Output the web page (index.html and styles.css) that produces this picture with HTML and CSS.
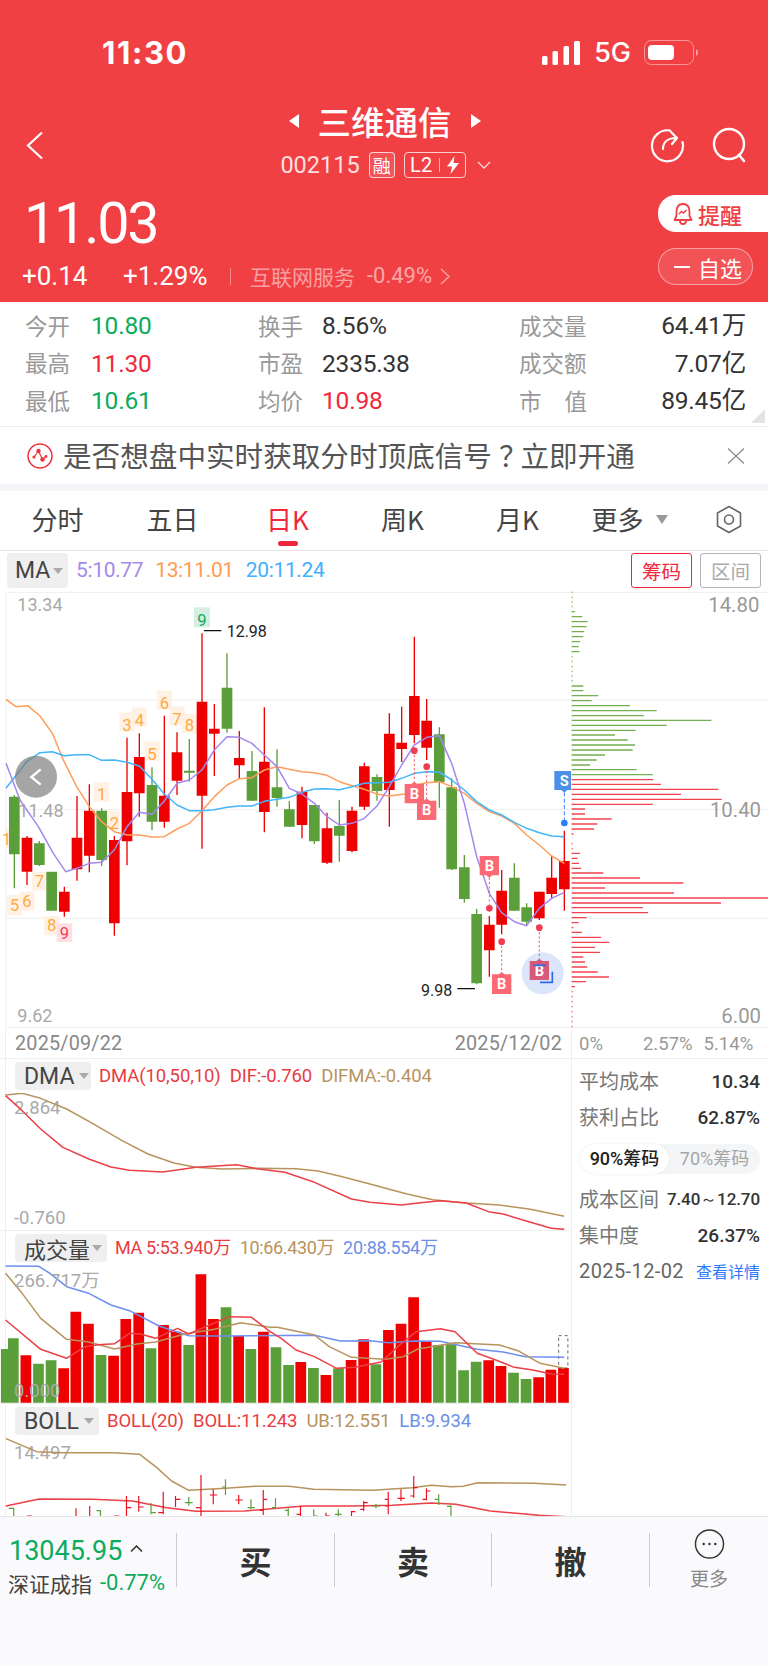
FILE: index.html
```html
<!DOCTYPE html>
<html lang="zh">
<head>
<meta charset="utf-8">
<title>三维通信</title>
<link rel="stylesheet" href="styles.css">
</head>
<body>
<div class="app">
  <header class="hero">
    <div class="status">
      <span class="time">11:30</span>
      <div class="status-right">
        <svg class="signal" width="38" height="24" viewBox="0 0 38 24"><g fill="#fff"><rect x="0" y="15" width="5.5" height="9" rx="1.5"/><rect x="10.5" y="10" width="5.5" height="14" rx="1.5"/><rect x="21.5" y="5" width="5.5" height="19" rx="1.5"/><rect x="32" y="0" width="6" height="24" rx="1.5"/></g></svg>
        <span class="net">5G</span>
        <svg class="battery" width="54" height="26" viewBox="0 0 54 26"><rect x=".5" y=".5" width="49" height="24" rx="7" fill="none" stroke="#fff" stroke-opacity=".45"/><rect x="4" y="5" width="26" height="15" rx="4" fill="#fff"/><path d="M52 9a4 4 0 0 1 0 7z" fill="#fff" fill-opacity=".5"/></svg>
      </div>
    </div>
    <nav class="nav">
      <svg class="back" width="18" height="29" viewBox="0 0 18 29"><path d="M16 1.5 2 14.5 16 27.5" fill="none" stroke="#fff" stroke-width="2.2"/></svg>
      <div class="nav-center">
        <div class="title-row">
          <svg width="11" height="14" viewBox="0 0 11 14"><path d="M11 0V14L1 7z" fill="#fff"/></svg>
          <h1 class="title">三维通信</h1>
          <svg width="11" height="14" viewBox="0 0 11 14"><path d="M0 0V14L10 7z" fill="#fff"/></svg>
        </div>
        <div class="code-row">
          <span class="code">002115</span>
          <span class="badge badge-rong">融</span>
          <span class="badge badge-l2">L2<i class="badge-sep"></i><svg width="12" height="18" viewBox="0 0 12 18"><path d="M7.5 0 0 10.5H5L3.5 18 12 7H6.5z" fill="#fff"/></svg></span>
          <svg class="down" width="14" height="8" viewBox="0 0 14 8"><path d="M1 1l6 6 6-6" fill="none" stroke="#fff" stroke-opacity=".8" stroke-width="1.3"/></svg>
        </div>
      </div>
      <div class="nav-actions">
        <svg width="36" height="36" viewBox="0 0 36 36"><path d="M21 3.5A15.5 15.5 0 1 0 33.5 15" fill="none" stroke="#fff" stroke-width="2.2" stroke-linecap="round"/><path d="M14 22c0-6 4-11 13-11M22 5l6 6-5 6" fill="none" stroke="#fff" stroke-width="2.2" stroke-linecap="round" stroke-linejoin="round"/></svg>
        <svg width="36" height="36" viewBox="0 0 36 36"><circle cx="18" cy="17" r="15" fill="none" stroke="#fff" stroke-width="2.4"/><path d="M28 28l5 6" stroke="#fff" stroke-width="2.6" stroke-linecap="round"/></svg>
      </div>
    </nav>
    <div class="quote">
      <div class="quote-left">
        <div class="price">11.03</div>
        <div class="change">
          <span class="chg-a">+0.14</span>
          <span class="chg-b">+1.29%</span>
          <i class="chg-sep"></i>
          <span class="sector">互联网服务</span>
          <span class="sector-pct">-0.49%</span>
          <svg width="10" height="17" viewBox="0 0 10 17"><path d="M1 1l8 7.5-8 7.5" fill="none" stroke="#fff" stroke-opacity=".55" stroke-width="1.3"/></svg>
        </div>
      </div>
      <div class="quote-right">
        <button class="remind">
          <svg width="20" height="22" viewBox="0 0 20 22"><path d="M10 1C5.5 1 3.5 4.5 3.5 9v4L1.5 17h17l-2-4V9C16.5 4.5 14.5 1 10 1zM7 18a3 3 0 0 0 6 0" fill="none" stroke="#f24145" stroke-width="1.8" stroke-linejoin="round"/><path d="M6 11l2.5-2.5 2 1.5 3-3" fill="none" stroke="#f24145" stroke-width="1.5"/></svg>
          <span>提醒</span>
        </button>
        <button class="watch"><i class="watch-minus"></i><span>自选</span></button>
      </div>
    </div>
  </header>

  <section class="stats">
    <div class="stat"><span class="lab lab-a">今开</span><span class="val up-g">10.80</span></div>
    <div class="stat"><span class="lab lab-b">换手</span><span class="val">8.56%</span></div>
    <div class="stat stat-end"><span class="lab">成交量</span><span class="val">64.41万</span></div>
    <div class="stat"><span class="lab lab-a">最高</span><span class="val up-r">11.30</span></div>
    <div class="stat"><span class="lab lab-b">市盈</span><span class="val">2335.38</span></div>
    <div class="stat stat-end"><span class="lab">成交额</span><span class="val">7.07亿</span></div>
    <div class="stat"><span class="lab lab-a">最低</span><span class="val up-g">10.61</span></div>
    <div class="stat"><span class="lab lab-b">均价</span><span class="val up-r">10.98</span></div>
    <div class="stat stat-end"><span class="lab lab-just"><b>市</b><b>值</b></span><span class="val">89.45亿</span></div>
    <i class="corner"></i>
  </section>

  <section class="notice">
    <svg width="26" height="26" viewBox="0 0 26 26"><circle cx="13" cy="13" r="12" fill="none" stroke="#f0323c" stroke-width="1.5"/><path d="M7 14l4.5-6 4 8.5 3.5-3" fill="none" stroke="#f0323c" stroke-width="1.1"/><g fill="#f0323c"><circle cx="11.5" cy="8" r="2.2"/><circle cx="15.5" cy="16.5" r="2.2"/><circle cx="7" cy="14" r="1.6"/><circle cx="19" cy="13.5" r="1.4"/></g></svg>
    <p class="notice-text">是否想盘中实时获取分时顶底信号<span class="notice-q">？</span>立即开通</p>
    <svg width="18" height="16" viewBox="0 0 18 16"><path d="M1 .5l16 15M17 .5l-16 15" stroke="#888" stroke-width="1.2"/></svg>
  </section>

  <div class="band"></div>

  <section class="tabs">
    <span class="tab">分时</span>
    <span class="tab">五日</span>
    <span class="tab tab-on">日K</span>
    <span class="tab">周K</span>
    <span class="tab">月K</span>
    <span class="tab tab-more">更多<svg width="12" height="9" viewBox="0 0 12 9"><path d="M0 0h12L6 9z" fill="#999"/></svg></span>
    <span class="tab tab-hex"><svg width="26" height="29" viewBox="0 0 26 29"><path d="M13 1.5 24.5 8V21L13 27.5 1.5 21V8z" fill="none" stroke="#666" stroke-width="1.6" stroke-linejoin="round"/><circle cx="13" cy="14.5" r="4.5" fill="none" stroke="#666" stroke-width="1.6"/></svg></span>
  </section>

  <section class="ma-row">
    <span class="pick pick-ma">MA<i class="caret"></i></span>
    <span class="ma ma-5">5:10.77</span>
    <span class="ma ma-13">13:11.01</span>
    <span class="ma ma-20">20:11.24</span>
    <span class="ma-btns"><button class="mbtn mbtn-on">筹码</button><button class="mbtn">区间</button></span>
  </section>

  <svg class="kchart" width="768" height="440" viewBox="0 0 2304 1320">
    <g stroke="#efefef" stroke-width="3" fill="none"><path d="M18 7H2304M18 330H2304M18 658H2304M18 985H2304M18 1312H2304M18 7V1320"/></g>
    <path d="M1716 0V1320" stroke="#eee" stroke-width="2"/>
    <text class="ax" x="52" y="64">13.34</text>
    <text class="ax" x="55" y="680">11.48</text>
    <text class="ax" x="52" y="1296">9.62</text>
    <text class="ax ax-r" x="2278" y="66">14.80</text>
    <text class="ax ax-r" x="2283" y="682">10.40</text>
    <text class="ax ax-r" x="2283" y="1298">6.00</text>

    <g class="td">
      <rect x="20" y="915" width="46" height="60"/><rect x="58" y="905" width="46" height="58"/><rect x="96" y="846" width="46" height="56"/><rect x="132" y="978" width="46" height="58"/>
      <rect x="282" y="577" width="46" height="58"/><rect x="320" y="662" width="38" height="58"/><rect x="358" y="367" width="46" height="58"/><rect x="395" y="352" width="46" height="58"/><rect x="433" y="454" width="46" height="58"/><rect x="470" y="302" width="46" height="56"/><rect x="508" y="349" width="46" height="58"/><rect x="545" y="372" width="46" height="58"/><rect x="18" y="716" width="12" height="58"/>
    </g>
    <rect x="170" y="1000" width="47" height="56" fill="#fde0e3"/>
    <rect x="582" y="52" width="48" height="60" fill="#d6efe2"/>

    <path class="wick red" d="M81 738V885M193 890V980M231 618V872M268 583V847M343 738V1037M381 443V826M418 430V680M493 377V713M531 427V615M606 130V776M643 342V558M718 423V565M793 352V727M906 590V745M981 668V822M1056 650V787M1093 518V660M1168 370V710M1205 350V516M1243 140V460M1280 327V510M1468 978V1160M1505 840V1033M1618 905V990M1655 798V925M1693 722V962"/>
    <path class="body red" d="M81 743V845M193 905V965M231 743V838M268 662V797M343 750V1000M381 606V754M418 501V610M493 617V695M531 487V572M606 335V617M643 416V431M718 504V526M793 515V666M906 605V705M981 715V818M1056 662V783M1093 529V650M1168 431V600M1205 458V477M1243 318V435M1280 392V473M1468 1004V1081M1505 902V1004M1618 905V985M1655 863V912M1693 813V898"/>
    <path class="wick green" d="M43 615V895M118 753V828M305 655V828M456 532V720M568 447V575M681 190V428M756 483V632M831 478V650M868 633V710M943 645V762M1018 630V815M1131 553V632M1318 412V653M1355 565V840M1393 795V938M1430 957V1183M1543 820V962M1580 940V1005"/>
    <path class="body green" d="M43 620V793M118 760V825M155 845V962M305 662V810M456 585V695M568 542V548M681 293V416M756 543V632M831 592V624M868 658V710M943 645V754M1018 708V737M1131 561V603M1318 433V577M1355 592V838M1393 832V927M1430 972V1180M1543 863V962M1580 952V995"/>

    <polyline class="ln ln-o" points="18,328 48,350 83,347 120,378 157,430 190,510 230,590 268,650 305,695 343,725 381,735 418,735 456,741 493,740 531,717 568,700 606,662 643,620 681,585 718,566 756,563 793,540 831,530 868,538 906,545 943,548 981,556 1018,575 1056,587 1093,598 1131,612 1168,618 1215,612 1243,585 1280,578 1318,575 1355,590 1393,610 1430,640 1468,665 1505,678 1543,700 1580,735 1618,765 1655,798 1693,820"/>
    <polyline class="ln ln-b" points="18,595 80,515 120,488 157,485 193,497 230,494 268,494 305,511 343,510 381,517 418,528 456,568 493,612 531,645 568,662 606,662 643,659 681,652 718,648 756,648 793,634 831,628 868,622 906,607 943,597 981,596 1018,599 1056,590 1093,580 1131,578 1168,577 1205,565 1243,550 1280,545 1318,546 1355,570 1393,600 1430,635 1468,660 1505,675 1543,697 1580,715 1618,728 1655,738 1693,740"/>
    <polyline class="ln ln-p" points="18,520 60,630 115,710 160,790 197,845 230,835 268,820 305,817 343,780 381,710 418,667 456,673 493,633 531,580 568,570 606,540 643,480 681,440 718,442 756,460 793,495 831,530 868,595 906,612 943,640 981,680 1018,705 1056,700 1093,685 1131,648 1168,590 1205,525 1243,465 1280,442 1318,437 1355,520 1393,640 1430,800 1468,910 1505,968 1543,995 1580,1007 1618,955 1655,925 1693,907"/>

    <g class="tdt">
      <text x="43" y="962">5</text><text x="81" y="952">6</text><text x="118" y="891">7</text><text x="155" y="1024">8</text><text x="305" y="631">1</text><text x="343" y="716">2</text><text x="381" y="422">3</text><text x="418" y="407">4</text><text x="456" y="509">5</text><text x="493" y="356">6</text><text x="531" y="404">7</text><text x="568" y="424">8</text><text x="20" y="764">1</text>
      <text x="193" y="1046" class="tdt-r">9</text>
      <text x="606" y="107" class="tdt-g">9</text>
    </g>

    <path d="M612 122H664M1372 1196H1425" stroke="#111" stroke-width="4"/>
    <text class="hl" x="680" y="142">12.98</text>
    <text class="hl" x="1263" y="1217">9.98</text>

    <path class="chip chip-g" d="M1715 7h3M1715 22h3M1715 36h3M1715 50h3M1715 65h10M1715 80h32M1715 95h48M1715 110h45M1715 125h38M1715 140h35M1715 155h25M1715 170h21M1715 185h23M1715 200h3M1715 215h3M1715 230h3M1715 245h3M1715 258h3M1715 272h3M1715 288h35M1715 302h35M1715 317h80M1715 332h60M1715 347h175M1715 362h255M1715 377h217M1715 391h419M1715 406h285M1715 421h192M1715 435h130M1715 450h168M1715 465h190M1715 480h183M1715 495h100M1715 510h75M1715 525h55M1715 539h195M1715 554h243"/>
    <path class="chip chip-r" d="M1715 569h245M1715 583h268M1715 598h440M1715 613h328M1715 628h450M1715 643h243M1715 657h40M1715 672h40M1715 687h120M1715 702h77M1715 717h67M1715 732h5M1715 761h3M1715 776h3M1715 790h25M1715 805h18M1715 820h22M1715 835h29M1715 849h95M1715 864h205M1715 879h335M1715 894h100M1715 909h307M1715 924h589M1715 939h448M1715 953h213M1715 968h229M1715 983h45M1715 998h21M1715 1013h5M1715 1027h31M1715 1042h88M1715 1057h113M1715 1072h70M1715 1087h85M1715 1101h35M1715 1116h40M1715 1131h47M1715 1146h78M1715 1161h112M1715 1175h43M1715 1190h10M1715 1205h3M1715 1220h3M1715 1235h3M1715 1250h3M1715 1265h3M1715 1280h3M1715 1295h3M1715 1310h3"/>

    <circle cx="108" cy="560" r="63" fill="#7a7a7a" fill-opacity=".68"/>
    <path d="M122 538 94 561 122 584" fill="none" stroke="#fff" stroke-width="7"/>

    <circle cx="1628" cy="1150" r="63" fill="#dbe6fb"/>
    <g class="dash"><path d="M1243 482V575M1280 530V625M1468 863V955M1505 1055V1146M1618 1013V1106"/></g>
    <g fill="#f23d50"><circle cx="1243" cy="482" r="10"/><circle cx="1280" cy="530" r="10"/><circle cx="1468" cy="955" r="10"/><circle cx="1505" cy="1055" r="10"/><circle cx="1618" cy="1013" r="10"/></g>
    <g class="bm">
      <path d="M1214 582h20l9-7 9 7h20v58h-58z"/><text x="1243" y="626">B</text>
      <path d="M1251 632h20l9-7 9 7h20v58h-58z"/><text x="1280" y="676">B</text>
      <path d="M1439 798h58v58h-20l-9 7-9-7h-20z"/><text x="1468" y="842">B</text>
      <path d="M1476 1153h20l9-7 9 7h20v59h-58z"/><text x="1505" y="1198">B</text>
      <path class="bm-sel" d="M1589 1113h20l9-7 9 7h20v57h-58z"/><text x="1618" y="1157">B</text>
    </g>
    <path d="M1600 1126h38M1620 1177h37V1145" fill="none" stroke="#2f6be8" stroke-width="5"/>
    <path d="M1693 607V690" stroke="#2b7fff" stroke-width="3" stroke-dasharray="12 7"/>
    <circle cx="1693" cy="699" r="10" fill="#2b7fff"/>
    <path d="M1663 543h50v57h-11l-9 8-9-8h-21z" fill="#4a8fe8"/>
    <text class="bm-s" x="1693" y="587">S</text>
  </svg>

  <section class="dates">
    <div class="dates-left"><span>2025/09/22</span><span>2025/12/02</span></div>
    <div class="dates-right"><span>0%</span><span class="pct2">2.57%</span><span>5.14%</span></div>
  </section>

  <section class="lower">
    <div class="panels">
      <div class="panel">
        <div class="panel-head">
          <span class="pick pick-dma">DMA<i class="caret"></i></span>
          <span class="ind red-t">DMA(10,50,10)</span><span class="ind red-t">DIF:-0.760</span><span class="ind tan-t">DIFMA:-0.404</span>
        </div>
        <svg class="plot" width="572" height="137" viewBox="0 1094 572 137">
          <text class="ax-s" x="14" y="1115">2.864</text>
          <text class="ax-s" x="14" y="1225">-0.760</text>
          <g transform="translate(0 1030) scale(.36996 .33333)">
            <polyline class="pl pl-tan" points="15,198 60,193 110,208 180,240 250,283 330,335 400,375 470,402 530,415 600,420 700,418 800,419 860,426 920,442 1000,465 1100,495 1170,512 1260,522 1350,528 1430,540 1525,562"/>
            <polyline class="pl pl-red" points="15,200 60,245 110,300 170,355 240,390 300,414 350,424 440,429 530,415 640,407 700,420 770,430 850,460 950,510 1000,520 1085,528 1130,522 1190,515 1260,522 1320,548 1360,555 1420,575 1490,598 1525,601"/>
          </g>
        </svg>
      </div>
      <div class="panel">
        <div class="panel-head head-vol">
          <span class="pick pick-vol">成交量<i class="caret"></i></span>
          <span class="ind red-t">MA 5:53.940万</span><span class="ind tan-t">10:66.430万</span><span class="ind blue-t">20:88.554万</span>
        </div>
        <svg class="plot" width="572" height="138" viewBox="0 1265 572 138">
          <g transform="translate(0 1030) scale(.36996 .33333)">
            <path class="vb vb-g" d="M17 957V1118M36 925V1118M104 1001V1118M138 991V1118M273 975V1118M408 955V1118M510 945V1118M611 832V1118M678 957V1118M746 952V1118M780 1005V1118M847 1014V1118M915 1015V1118M1016 1003V1118M1185 945V1118M1219 943V1118M1253 1021V1118M1287 995V1118M1388 1028V1118M1422 1047V1118"/>
            <path class="vb vb-r" d="M70 976V1118M172 1015V1118M205 845V1118M239 881V1118M307 977V1118M340 867V1118M375 848V1118M442 885V1118M476 905V1118M543 733V1118M577 867V1118M645 918V1118M712 905V1118M813 996V1118M881 1035V1118M949 990V1118M983 928V1118M1050 900V1118M1084 881V1118M1118 802V1118M1152 935V1118M1321 991V1118M1354 1008V1118M1456 1042V1118M1489 1019V1118M1523 1014V1118"/>
            <rect class="vbox" x="1510" y="917" width="25" height="97"/>
            <polyline class="pl pl-blue" points="15,708 105,709 135,730 180,770 240,790 300,825 350,842 430,888 510,917 600,918 850,916 920,933 1000,932 1050,938 1120,933 1190,934 1290,958 1360,966 1420,980 1525,982"/>
            <polyline class="pl pl-tan" points="15,730 60,790 110,865 180,928 240,936 310,957 370,942 420,936 500,912 580,898 650,878 730,892 750,892 850,915 890,950 950,982 1040,988 1090,980 1130,957 1230,938 1350,945 1400,962 1460,1000 1525,1015"/>
            <polyline class="pl pl-red" points="15,870 110,958 180,985 230,950 265,944 310,941 350,910 380,912 420,925 480,895 510,912 620,860 680,862 730,905 760,925 800,960 850,980 910,1015 960,1012 1030,996 1075,950 1125,905 1190,896 1230,905 1290,970 1340,990 1390,1012 1440,1020 1490,1032 1525,1033"/>
          </g>
          <text class="ax-s" x="14" y="1287">266.717万</text>
          <text class="ax-s" x="14" y="1397">0.000</text>
        </svg>
      </div>
      <div class="panel">
        <div class="panel-head">
          <span class="pick pick-boll">BOLL<i class="caret"></i></span>
          <span class="ind red-t">BOLL(20)</span><span class="ind red-t">BOLL:11.243</span><span class="ind tan-t">UB:12.551</span><span class="ind blue-t">LB:9.934</span>
        </div>
        <svg class="plot" width="572" height="79" viewBox="0 1437 572 79">
          <text class="ax-s" x="14" y="1458">14.497</text>
          <g transform="translate(0 1400) scale(.4902 .33333)">
            <polyline class="pl pl-tan" points="12,113 75,152 130,155 230,155 285,160 320,200 350,240 385,268 460,262 520,256 590,256 640,265 760,268 840,260 880,253 920,257 945,256 975,245 1090,247 1155,252"/>
            <polyline class="pl pl-red" points="12,315 80,294 190,295 270,300 340,320 400,331 500,330 620,315 720,315 800,313 880,306 930,310 1000,330 1100,343 1155,347"/>
            <path class="ohlc oh-r" d="M55 345h10M155 322V350M183 315V350M233 345h10M258 285V350M283 285V332M333 272V340M358 285V318M410 222V350M435 265V310M487 282V310M537 267V342M613 315V350M665 335V350M717 330V350M742 300V330M792 272V340M818 265V300M844 225V290M870 262V298M400 320h10M258 320h10M283 318h10M323 335h10M358 295h10M428 282h15M480 297h15M530 328h8M537 295h8M605 340h8M665 345h8M717 332h8M735 325h7M742 305h8M785 315h7M785 295h7M811 292h15M844 260h8M837 285h7M870 270h8M862 295h8"/>
            <path class="ohlc oh-g" d="M28 320V350M78 349h12M205 328V350M308 305V340M385 288V314M460 235V282M512 295V325M562 292V325M588 322V345M640 325V350M690 325V350M767 308V322M895 280V312M920 313V350M18 322h10M197 329h8M308 335h10M377 305h16M453 258h7M505 320h15M555 320h7M581 328h7M640 345h8M683 340h14M760 315h15M912 316h8M887 295h8"/>
          </g>
        </svg>
      </div>
    </div>
    <aside class="side">
      <div class="side-row"><span class="side-lab">平均成本</span><span class="side-val">10.34</span></div>
      <div class="side-row"><span class="side-lab">获利占比</span><span class="side-val">62.87%</span></div>
      <div class="pill"><span class="pill-on">90%筹码</span><span class="pill-off">70%筹码</span></div>
      <div class="side-row"><span class="side-lab">成本区间</span><span class="side-val side-range">7.40～12.70</span></div>
      <div class="side-row"><span class="side-lab">集中度</span><span class="side-val">26.37%</span></div>
      <div class="side-row"><span class="side-date">2025-12-02</span><span class="side-link">查看详情</span></div>
    </aside>
  </section>

  <footer class="bar">
    <div class="index">
      <div class="index-top"><span class="index-val">13045.95</span><svg width="13" height="7" viewBox="0 0 13 7"><path d="M1 6.5 6.5 1 12 6.5" fill="none" stroke="#333" stroke-width="1.5"/></svg></div>
      <div class="index-bot"><span class="index-name">深证成指</span><span class="index-pct">-0.77%</span></div>
    </div>
    <div class="act act-1">买</div>
    <div class="act act-2">卖</div>
    <div class="act act-3">撤</div>
    <div class="act-more">
      <svg width="31" height="31" viewBox="0 0 31 31"><circle cx="15.5" cy="15.5" r="14.5" fill="none" stroke="#333" stroke-width="1.5"/><g fill="#333"><circle cx="9.5" cy="15.5" r="1.3"/><circle cx="15.5" cy="15.5" r="1.3"/><circle cx="21.5" cy="15.5" r="1.3"/></g></svg>
      <span>更多</span>
    </div>
  </footer>
</div>
</body>
</html>
```
FILE: styles.css
```css
* { box-sizing: border-box; margin: 0; padding: 0; }
html, body { background: #fff; }
body { width: 768px; height: 1665px; overflow: hidden; font-family: Roboto, "Noto Sans CJK SC", sans-serif; color: #333; }
button { font: inherit; border: 0; background: none; }
i { font-style: normal; }
.app { width: 768px; height: 1665px; display: flex; flex-direction: column; }

.hero { height: 302px; background: #f14044; color: #fff; flex: none; }
.status { height: 105px; display: flex; align-items: center; justify-content: space-between; padding: 0 70px 0 102px; }
.time { font: 700 31px/1 Inter, sans-serif; letter-spacing: 1.6px; }
.status-right { display: flex; align-items: center; }
.net { font: 500 27px/1 Inter, sans-serif; margin: 0 13px 0 14px; }

.nav { height: 80px; display: grid; grid-template-columns: 1fr auto 1fr; padding: 0 21px 0 26px; align-items: center; }
.nav-center { align-self: start; display: flex; flex-direction: column; align-items: center; margin-left: -4px; margin-top: -2px; }
.title-row { display: flex; align-items: center; gap: 19px; height: 36px; }
.title { font: 500 33.5px/36px "Noto Sans CJK SC", sans-serif; }
.code-row { display: flex; align-items: center; height: 26px; margin-top: 13px; margin-left: 2px; }
.code { font: 400 23.5px/26px Roboto, sans-serif; color: rgba(255,255,255,.85); margin-right: 9px; }
.badge { height: 26px; border: 1px solid rgba(255,255,255,.75); border-radius: 4px; display: flex; align-items: center; justify-content: center; }
.badge-rong { width: 26px; font: 400 18px/1 "Noto Sans CJK SC", sans-serif; background: rgba(255,255,255,.1); margin-right: 9px; }
.badge-l2 { width: 62px; font: 400 20px/1 Roboto, sans-serif; gap: 7px; }
.badge-sep { width: 1px; height: 14px; background: rgba(255,255,255,.6); }
.down { margin-left: 11px; }
.nav-actions { display: flex; justify-content: flex-end; gap: 26px; }
.back { justify-self: start; }

.quote { height: 117px; display: flex; justify-content: space-between; }
.quote-left { padding: 10px 0 0 22px; }
.price { font: 400 57.5px/58px Roboto, sans-serif; letter-spacing: -2.2px; margin-left: 2px; }
.change { display: flex; align-items: center; height: 30px; margin-top: 8px; }
.chg-a, .chg-b { font: 400 26px/30px Roboto, sans-serif; }
.chg-a { width: 101px; }
.chg-b { width: 107px; }
.chg-sep { width: 1px; height: 17px; background: rgba(255,255,255,.4); margin-right: 19px; }
.sector { font: 400 21px/30px "Noto Sans CJK SC", sans-serif; color: rgba(255,255,255,.5); margin-right: 12px; }
.sector-pct { font: 400 22px/30px Roboto, sans-serif; color: rgba(255,255,255,.55); margin-right: 8px; }
.quote-right { display: flex; flex-direction: column; align-items: flex-start; width: 110px; padding-top: 10px; gap: 16px; }
.remind { width: 110px; height: 37px; background: #fff; border-radius: 18px 0 0 18px; color: #f14044; display: flex; align-items: center; padding-left: 15px; gap: 5px; font: 500 22px/1 "Noto Sans CJK SC", sans-serif; }
.watch { width: 95px; height: 37px; border: 1px solid rgba(255,255,255,.45); background: rgba(255,255,255,.1); border-radius: 18px; color: #fff; display: flex; align-items: center; padding-left: 15px; gap: 8px; font: 400 22px/1 "Noto Sans CJK SC", sans-serif; }
.watch-minus { width: 16px; height: 2px; background: #fff; }

.stats { position: relative; height: 125px; flex: none; padding: 6px 22px 0 25px; display: grid; grid-template-columns: 233px 261px 1fr; grid-auto-rows: 37.5px; border-bottom: 1px solid #ebebeb; }
.stat { display: flex; align-items: center; }
.stat-end { justify-content: space-between; }
.lab { font: 400 22.5px/1 "Noto Sans CJK SC", sans-serif; color: #999; margin-top: -4px; }
.lab-a { width: 66px; }
.lab-b { width: 64px; }
.lab-just { width: 68px; display: flex; justify-content: space-between; }
.lab-just b { font-weight: 400; }
.val { font: 400 24.5px/1 Roboto, "Noto Sans CJK SC", sans-serif; color: #333; letter-spacing: -.2px; margin-top: -1px; }
.up-g { color: #0dab5c; }
.up-r { color: #f1283c; }
.corner { position: absolute; right: 3px; bottom: 3px; width: 0; height: 0; border-style: solid; border-width: 0 0 14px 14px; border-color: transparent transparent #e4e4e4 transparent; }

.notice { height: 57px; flex: none; display: flex; align-items: center; padding: 0 23px 0 27px; gap: 10px; }
.notice-text { flex: 1; font: 400 28.6px/1 "Noto Sans CJK SC", sans-serif; color: #555; white-space: nowrap; }
.notice-q { display: inline-block; width: 1em; text-align: center; font-feature-settings: "palt"; }
.band { height: 7px; flex: none; background: #f4f5f8; }

.tabs { height: 60px; flex: none; display: grid; grid-template-columns: repeat(6, 115px) 78px; border-bottom: 1px solid #e6e6e6; align-items: center; padding-bottom: 3px; }
.tab { position: relative; text-align: center; font: 400 26px/1 "Noto Sans CJK SC", sans-serif; color: #444; }
.tab-on { color: #f1283c; }
.tab-on::after { content: ""; position: absolute; left: 48px; bottom: -14px; width: 20px; height: 5px; border-radius: 3px; background: #f1283c; }
.tab-more { display: flex; align-items: center; justify-content: center; gap: 12px; padding-right: 6px; }
.tab-hex { display: flex; justify-content: center; }

.ma-row { height: 39px; flex: none; display: flex; align-items: center; padding: 0 7px; }
.pick { display: flex; align-items: center; background: #efefef; border-radius: 4px; color: #444; font: 400 23px/1 "Noto Sans CJK SC", Roboto, sans-serif; height: 28px; flex: none; }
.caret { width: 0; height: 0; border: 5px solid transparent; border-top: 6px solid #aaa; border-bottom: 0; margin-left: 5px; }
.pick-ma { width: 61px; height: 35px; padding-left: 8px; margin-right: 8px; font: 400 23px/1 Roboto, sans-serif; }
.pick-ma .caret { margin-left: 3px; }
.ma { font: 400 21px/1 Roboto, sans-serif; margin-right: 12px; letter-spacing: -.35px; }
.ma-5 { color: #a28ae8; }
.ma-13 { color: #ff9b53; }
.ma-20 { color: #3fb1ff; }
.ma-btns { margin-left: auto; display: flex; gap: 8px; }
.mbtn { width: 61px; height: 35px; border: 1px solid #b5b5b5; border-radius: 3px; color: #aaa; font: 400 19.5px/1 "Noto Sans CJK SC", sans-serif; }
.mbtn-on { color: #f1283c; border-color: #f1283c; }

.kchart { display: block; flex: none; }
.ax { font: 400 54px Roboto, sans-serif; fill: #a9a9a9; }
.ax-r { font-size: 61px; text-anchor: end; fill: #999; }
.td rect { fill: #fff2e4; }
.wick { fill: none; stroke-width: 4; }
.body { fill: none; stroke-width: 32; }
.red { stroke: #ee0000; }
.green { stroke: #5b9f3a; }
.ln { fill: none; stroke-width: 4.5; stroke-linejoin: round; }
.ln-o { stroke: #ff9d5c; }
.ln-b { stroke: #43b5fb; }
.ln-p { stroke: #a487ec; }
.tdt text { font: 400 50px Roboto, sans-serif; text-anchor: middle; fill: #ffa940; }
.tdt .tdt-r { fill: #f5405a; }
.tdt .tdt-g { fill: #10ab60; }
.hl { font: 400 48px Roboto, sans-serif; fill: #222; }
.chip { fill: none; stroke-width: 4.2; }
.chip-g { stroke: #74b052; }
.chip-r { stroke: #f4434e; }
.dash path { fill: none; stroke: #f23d50; stroke-width: 2.5; stroke-dasharray: 7 6; }
.bm path { fill: #fb6a74; }
.bm .bm-sel { fill: #d75a7a; }
.bm text { font: 700 44px Roboto, sans-serif; fill: #fff; text-anchor: middle; }
.bm-s { font: 700 44px Roboto, sans-serif; fill: #fff; text-anchor: middle; }

.dates { height: 29px; flex: none; display: flex; border-bottom: 1px solid #eee; background: linear-gradient(#eee, #eee) 5px 0 / 1px 100% no-repeat; }
.dates-left { width: 572px; padding: 0 9px 0 15px; display: flex; justify-content: space-between; align-items: center; border-right: 1px solid #eee; font: 400 19.8px/1 Roboto, sans-serif; color: #888; letter-spacing: .2px; }
.dates-right { display: flex; align-items: center; padding-left: 7px; font: 400 18.5px/1 Roboto, sans-serif; color: #999; }
.pct2 { margin: 0 11px 0 40px; }

.lower { height: 457px; flex: none; display: flex; overflow: hidden; }
.panels { width: 572px; flex: none; border-right: 1px solid #eee; background: linear-gradient(#eee, #eee) 5px 0 / 1px 100% no-repeat; }
.panel { border-bottom: 1px solid #eee; }
.panel:last-child { border-bottom: 0; }
.panel-head { height: 34px; display: flex; align-items: center; padding: 2px 0 2px 15px; }
.plot { display: block; overflow: hidden; }
.pick-dma { width: 76px; padding-left: 9px; margin-right: 8px; font-family: Roboto, sans-serif; }
.pick-vol { width: 92px; padding-left: 9px; margin-right: 8px; font-size: 22px; }
.pick-vol .caret { margin-left: 2px; }
.pick-boll { width: 84px; padding-left: 9px; margin-right: 8px; font-family: Roboto, sans-serif; }
.ind { font: 400 18.5px/1 Roboto, "Noto Sans CJK SC", sans-serif; margin-right: 9px; white-space: nowrap; letter-spacing: -.1px; }
.head-vol .ind { font-size: 18px; letter-spacing: -.35px; margin-right: 9px; }
.red-t { color: #e93b40; }
.tan-t { color: #b8935e; }
.blue-t { color: #6c8fe6; }
.ax-s { font: 400 18.5px Roboto, "Noto Sans CJK SC", sans-serif; fill: #aaa; }
.pl { fill: none; stroke-width: 1.5; vector-effect: non-scaling-stroke; stroke-linejoin: round; }
.pl-tan { stroke: #b8935e; }
.pl-red { stroke: #ec3f46; }
.pl-blue { stroke: #6d8ff0; }
.vb { fill: none; stroke-width: 29; }
.vb-g { stroke: #5b9f3a; }
.vb-r { stroke: #ee0000; }
.vbox { fill: none; stroke: #666; stroke-width: 1; stroke-dasharray: 3 3; vector-effect: non-scaling-stroke; }
.ohlc { fill: none; stroke-width: 1.2; vector-effect: non-scaling-stroke; }
.oh-r { stroke: #ee1122; }
.oh-g { stroke: #5b9f3a; }

.side { width: 196px; padding: 4px 8px 0 7px; }
.side-row { display: flex; justify-content: space-between; align-items: center; height: 36px; }
.side-lab { font: 400 20px/1 "Noto Sans CJK SC", sans-serif; color: #777; }
.side-val { font: 500 19px/1 Roboto, sans-serif; color: #333; }
.side-range { font-size: 17px; letter-spacing: -.1px; }
.side-date { font: 400 20px/1 Roboto, sans-serif; color: #666; letter-spacing: .4px; }
.side-link { font: 400 16px/1 "Noto Sans CJK SC", sans-serif; color: #2e7bff; }
.pill { height: 30px; margin: 9px 0 7px 1px; background: #f4f5f7; border-radius: 15px; display: flex; align-items: center; font: 500 18px/1 Roboto, "Noto Sans CJK SC", sans-serif; }
.pill-on { width: 89px; height: 30px; border-radius: 15px; background: #fff; box-shadow: 0 0 3px rgba(0,0,0,.08); display: flex; align-items: center; justify-content: center; color: #222; }
.pill-off { flex: 1; text-align: center; color: #a5a5a5; font-weight: 400; }

.bar { flex: 1; background: #fafafc; border-top: 1px solid #e4e4e6; display: flex; align-items: flex-start; }
.index { width: 176px; flex: none; padding: 20px 0 0 9px; }
.index-top { display: flex; align-items: center; gap: 8px; height: 28px; }
.index-val { font: 400 27px/1 Roboto, sans-serif; color: #0dab5c; }
.index-top svg { margin-top: -6px; }
.index-bot { display: flex; align-items: center; height: 30px; margin: 3px 0 0 -1px; }
.index-name { font: 400 21px/1 "Noto Sans CJK SC", sans-serif; color: #444; margin-right: 8px; }
.index-pct { font: 400 22px/1 Roboto, sans-serif; color: #0dab5c; }
.act { height: 54px; margin-top: 16px; flex: none; border-left: 1px solid #ccc; font: 700 32px/54px "Noto Sans CJK SC", sans-serif; text-align: center; color: #333; }
.act-1 { width: 158px; }
.act-2 { width: 157px; }
.act-3 { width: 158px; }
.act-more { flex: 1; height: 54px; margin-top: 16px; border-left: 1px solid #ccc; display: flex; flex-direction: column; align-items: center; }
.act-more svg { margin-top: -4px; }
.act-more span { font: 400 19px/1 "Noto Sans CJK SC", sans-serif; color: #888; margin-top: 9px; }
```
